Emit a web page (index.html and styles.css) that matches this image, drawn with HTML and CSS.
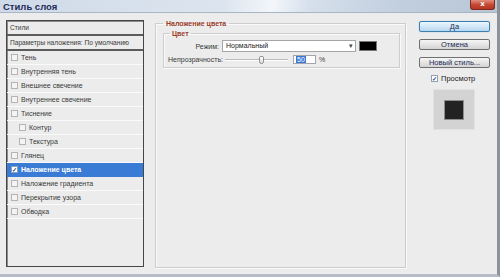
FILE: index.html
```html
<!DOCTYPE html>
<html lang="ru">
<head>
    <meta charset="UTF-8" />
    <title>Стиль слоя</title>
    <link rel="stylesheet" href="styles.css">
</head>
<body>
<div class="window">
    <div class="titlebar">
        <span class="title">Стиль слоя</span>
        <span class="close">x</span>
    </div>
    <div class="content">
        <div class="styles-list">
            <div class="head-row">Стили</div>
            <div class="head-row">Параметры наложения: По умолчанию</div>
            <div class="row"><span class="box"></span>Тень</div>
            <div class="row"><span class="box"></span>Внутренняя тень</div>
            <div class="row"><span class="box"></span>Внешнее свечение</div>
            <div class="row"><span class="box"></span>Внутреннее свечение</div>
            <div class="row"><span class="box"></span>Тиснение</div>
            <div class="row sub"><span class="box"></span>Контур</div>
            <div class="row sub"><span class="box"></span>Текстура</div>
            <div class="row"><span class="box"></span>Глянец</div>
            <div class="row active"><span class="box checked">✓</span>Наложение цвета</div>
            <div class="row"><span class="box"></span>Наложение градиента</div>
            <div class="row"><span class="box"></span>Перекрытие узора</div>
            <div class="row"><span class="box"></span>Обводка</div>
        </div>

        <fieldset class="group outer">
            <legend>Наложение цвета</legend>
            <fieldset class="group inner">
                <legend>Цвет</legend>
                <div class="field">
                    <label>Режим:</label>
                    <div class="controls">
                        <div class="select">Нормальный<span class="arrow">▾</span></div>
                        <span class="swatch"></span>
                    </div>
                </div>
                <div class="field">
                    <label>Непрозрачность:</label>
                    <div class="controls">
                        <div class="slider"><span class="track"></span><span class="thumb"></span></div>
                        <div class="num"><span class="sel">50</span></div>
                        <span class="pct">%</span>
                    </div>
                </div>
            </fieldset>
        </fieldset>

        <div class="side">
            <button class="btn default">Да</button>
            <button class="btn">Отмена</button>
            <button class="btn">Новый стиль...</button>
            <div class="preview-check"><span class="box checked">✓</span>Просмотр</div>
            <div class="preview"><span class="preview-inner"></span></div>
        </div>
    </div>
</div>
</body>
</html>
```

FILE: styles.css
```css
:root {
    --bg: #ececec;
    --fg: #3a3a3a;
    --accent: #3a7bd5;
    --legend: #9a3b28;
    --btn-text: #1c2b56;
}
* { margin: 0; padding: 0; box-sizing: border-box; }
body {
    font-family: 'Liberation Sans', Arial, sans-serif;
    font-size: 7px;
    color: var(--fg);
    background: #fff;
}
.window {
    width: 500px;
    height: 277px;
    background: var(--bg);
    border-right: 3px solid #8d939b;
    border-bottom: 3px solid #b6bcc5;
    display: flex;
    flex-direction: column;
}
.titlebar {
    height: 13px;
    flex: none;
    display: flex;
    justify-content: space-between;
    align-items: flex-start;
    background: linear-gradient(100deg, #cfdae8 0%, #dce5ef 45%, #f3f6fa 55%, #d6e0ec 62%, #c2cfde 80%, #b9c6d6 100%);
    border-bottom: 1px solid #a9b5c4;
}
.title {
    font-family: 'Liberation Sans', Arial, sans-serif;
    font-weight: bold;
    font-size: 9.5px;
    line-height: 11px;
    color: #1d2c5b;
    padding: 1px 0 0 3px;
}
.close {
    width: 25px;
    height: 10px;
    margin-right: 2px;
    background: linear-gradient(#e28d7f, #c4452f 55%, #b53623);
    border: 1px solid #7b2a20;
    border-top: none;
    border-radius: 0 0 3px 3px;
    color: #fff;
    font-family: 'DejaVu Sans', sans-serif;
    font-weight: bold;
    font-size: 7px;
    line-height: 8px;
    text-align: center;
}
.content {
    flex: 1;
    display: flex;
    align-items: flex-start;
    padding: 7px 0 0 6px;
}

/* left list */
.styles-list {
    width: 138px;
    height: 247px;
    flex: none;
    border: 1px solid #474747;
    box-shadow: inset 1px 1px 0 #8c8c8c;
    background: var(--bg);
}
.head-row {
    height: 15px;
    line-height: 14px;
    padding-left: 3px;
    font-size: 6.6px;
    border-bottom: 2px solid #5c5c5c;
}
.row {
    height: 14px;
    display: flex;
    align-items: center;
    gap: 3px;
    padding-left: 4px;
    border-bottom: 1px solid #fafafa;
}
.row.sub { padding-left: 12px; }
.row.active {
    background: var(--accent);
    color: #fff;
    font-weight: bold;
    border-bottom-color: var(--accent);
}
.box {
    width: 7px;
    height: 7px;
    flex: none;
    background: #f4f4f4;
    border: 1px solid #b4b4b4;
    font-size: 6px;
    line-height: 6px;
    text-align: center;
    color: #1f3f7a;
    font-weight: bold;
    overflow: hidden;
}
.box.checked { background: #fff; border-color: #8aa0bb; }

/* groups */
.group {
    border: 1px solid #cdcdcd;
    box-shadow: 1px 1px 0 #fafafa, inset 1px 1px 0 #fafafa;
}
.group legend {
    color: var(--legend);
    font-weight: bold;
    padding: 0 3px;
    line-height: 9px;
}
.outer {
    width: 251px;
    height: 249px;
    margin: -1px 0 0 11px;
    padding: 1px 5px 0 7px;
    flex: none;
}
.inner {
    padding: 2px 4px 3px 4px;
}
.inner legend { padding: 0 2px; margin-left: 2px; }
.field {
    display: grid;
    grid-template-columns: 51px 1fr;
    column-gap: 3px;
    align-items: center;
    margin-bottom: 3px;
}
.field:last-child { margin-bottom: 0; }
.field label { text-align: right; }
.controls {
    display: flex;
    align-items: center;
    gap: 3px;
}
.select {
    width: 134px;
    height: 12px;
    line-height: 10px;
    padding-left: 3px;
    background: #fff;
    border: 1px solid #a5a5a5;
    display: flex;
    justify-content: space-between;
    color: #222;
}
.arrow {
    width: 9px;
    font-size: 7px;
    text-align: center;
    color: #444;
}
.swatch {
    width: 18px;
    height: 10px;
    background: #000;
    border: 1px solid #777;
}
.slider {
    width: 68px;
    height: 9px;
    display: flex;
    align-items: center;
    padding: 0 2px 0 3px;
}
.track {
    flex: 1;
    height: 2px;
    background: #b9b9b9;
    border-bottom: 1px solid #fff;
}
.thumb {
    width: 5px;
    height: 8px;
    margin-left: -29px;
    margin-right: 24px;
    background: linear-gradient(#fdfdfd, #dcdcdc);
    border: 1px solid #8b8b8b;
    border-radius: 2px 2px 3px 3px;
}
.num {
    width: 23px;
    height: 9px;
    background: #fff;
    border: 1px solid #a3a6ad;
    padding-left: 2px;
    line-height: 7px;
}
.sel {
    background: #3a78d4;
    color: #fff;
    padding: 0 1px;
}

/* right column */
.side {
    width: 71px;
    margin: 1px 0 0 13px;
    display: flex;
    flex-direction: column;
    gap: 7px;
}
.btn {
    height: 11px;
    font-family: 'Liberation Sans', Arial, sans-serif;
    font-size: 7.5px;
    line-height: 9px;
    color: var(--btn-text);
    background: linear-gradient(#f6f6f6, #e4e4e4 50%, #d3d3d3);
    border: 1px solid #6f6f6f;
    border-radius: 2px;
}
.btn.default {
    background: linear-gradient(#eaf5fd, #d2e8f8 50%, #b7d7f0);
    border-color: #3c7fb1;
    box-shadow: 0 0 1px #6fb3e8;
}
.preview-check {
    display: flex;
    align-items: center;
    gap: 3px;
    margin: -1px 0 0 12px;
    font-size: 7.5px;
    color: #222;
}
.preview {
    width: 42px;
    height: 41px;
    margin: -1px 0 0 14px;
    background: #d3d3d3;
    border: 1px solid #e2e2e2;
    display: flex;
    align-items: center;
    justify-content: center;
}
.preview-inner {
    width: 20px;
    height: 20px;
    background: #222;
    border: 1px solid #8d8d8d;
}
```
